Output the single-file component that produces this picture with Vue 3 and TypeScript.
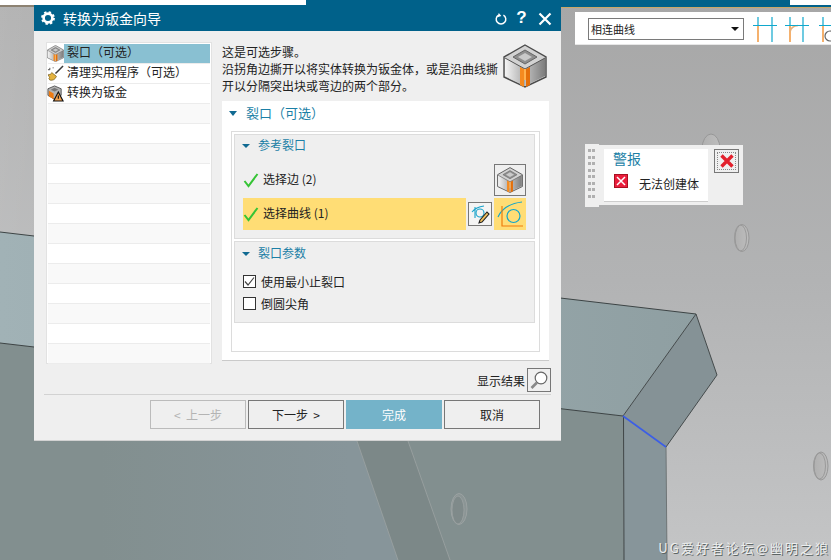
<script setup lang="ts">
const steps = ['裂口（可选）', '清理实用程序（可选）', '转换为钣金']
const emptyRows = Array.from({ length: 13 }, (_, i) => i + 3)
</script>

<template>
  <div class="desktop">
    <svg class="symbols" width="0" height="0">
      <defs>
        <linearGradient id="cube-left" x1="0" x2="1" y1="0" y2="0">
          <stop offset="0" stop-color="#f4f4f4" />
          <stop offset="1" stop-color="#a9a9a9" />
        </linearGradient>
        <linearGradient id="cube-right" x1="0" x2="1" y1="0" y2="0">
          <stop offset="0" stop-color="#c2c2c2" />
          <stop offset="1" stop-color="#7d7d7d" />
        </linearGradient>
      </defs>
      <symbol id="cube" viewBox="0 0 44 44">
        <path d="M22 1 43 13 43 33 22 43 1 33 1 13Z" fill="#d2d2d2" stroke="#4a4a4a" stroke-width="1.4" />
        <path d="M22 6 34 13 22 20 10 13Z" fill="#8e8e8e" stroke="#666" />
        <path d="M22 9 29 13 22 17 15 13Z" fill="#c9c9c9" />
        <path d="M2 14 22 25 22 42 2 32Z" fill="url(#cube-left)" />
        <path d="M42 14 22 25 22 42 42 32Z" fill="url(#cube-right)" />
        <path d="M2 14 22 25 42 14" fill="none" stroke="#555" stroke-width="1" />
        <path d="M17 23 21 25 21 43 17 41Z" fill="#f58a1f" />
        <path d="M23 25 27 23 27 41 23 43Z" fill="#e46f0a" />
        <path d="M21 25 23 25 23 36 21 36Z" fill="#ffb04d" />
      </symbol>
    </svg>

    <svg class="scene" viewBox="0 0 831 560" width="831" height="560">
      <defs>
        <linearGradient id="wall" x1="0" x2="0" y1="0" y2="1">
          <stop offset="0" stop-color="#a7a7a7" />
          <stop offset="0.5" stop-color="#b2b3b4" />
          <stop offset="1" stop-color="#c4c5c6" />
        </linearGradient>
        <linearGradient id="wall-left" x1="0" x2="1" y1="0" y2="0">
          <stop offset="0" stop-color="#fff" stop-opacity="0.16" />
          <stop offset="1" stop-color="#fff" stop-opacity="0" />
        </linearGradient>
        <linearGradient id="top-face" x1="0" x2="1" y1="0" y2="0">
          <stop offset="0" stop-color="#a1b2b6" />
          <stop offset="1" stop-color="#8f9fa2" />
        </linearGradient>
        <linearGradient id="front-face" gradientUnits="userSpaceOnUse" x1="100" x2="350" y1="0" y2="0">
          <stop offset="0" stop-color="#828f8f" />
          <stop offset="1" stop-color="#87959a" />
        </linearGradient>
        <linearGradient id="hole-fill" x1="0" x2="1" y1="0" y2="0">
          <stop offset="0" stop-color="#b0b0b0" />
          <stop offset="1" stop-color="#bdbdbd" />
        </linearGradient>
      </defs>
      <rect width="831" height="560" fill="url(#wall)" />
      <rect width="220" height="560" fill="url(#wall-left)" />
      <rect x="0" y="0" width="306" height="5" fill="#fff" />
      <rect x="306" y="0" width="525" height="7" fill="#00618a" />
      <rect x="790" y="0" width="41" height="5" fill="#fff" />
      <rect x="0" y="5" width="34" height="2" fill="#8d8272" />
      <rect x="561" y="7" width="270" height="1" fill="#c9a868" />

      <path d="M0 232 696 314 623 416 0 343Z" fill="url(#top-face)" />
      <path d="M0 343 623 416 624 560 0 560Z" fill="#828f8f" />
      <path d="M357 441 398 560 0 560 0 441Z" fill="url(#front-face)" />
      <path d="M357 441 408 441 450 560 398 560Z" fill="#7c8888" />
      <path d="M357 441 398 560M408 441 450 560" stroke="#a0a6a6" stroke-width="0.7" fill="none" />
      <path d="M623 416 666 447 667 560 624 560Z" fill="#87959a" />
      <path d="M696 314 717 375 666 447 623 416Z" fill="#859296" />
      <path d="M0 232 696 314M0 343 623 416" stroke="#3d4445" stroke-width="1" fill="none" />
      <path d="M696 314 717 375 666 447M696 314 623 416" stroke="#454b4c" stroke-width="1" fill="none" />
      <path d="M623.5 416 624 560" stroke="#3f4546" stroke-width="1" fill="none" />
      <path d="M666 447 667 560" stroke="#6f7576" stroke-width="1" fill="none" />
      <path d="M623 416 666 447" stroke="#3c5ee6" stroke-width="1.6" fill="none" />

      <g fill="url(#hole-fill)" stroke="#979797" stroke-width="1">
        <ellipse cx="742" cy="238" rx="7" ry="13.5" />
        <ellipse cx="711" cy="149" rx="9" ry="15" />
        <ellipse cx="821" cy="466" rx="7" ry="14" />
      </g>
      <g fill="none" stroke="#9a9a9a" stroke-width="1">
        <ellipse cx="740.5" cy="238" rx="6" ry="13" />
        <ellipse cx="819.5" cy="466" rx="6" ry="13" />
      </g>
      <ellipse cx="459" cy="509" rx="8" ry="15.5" fill="#8b9595" stroke="#9ba2a2" />
      <ellipse cx="458" cy="510" rx="6" ry="14" fill="#7f8a8a" stroke="#a0a6a6" stroke-width="0.7" />
    </svg>

    <div class="watermark">UG爱好者论坛@幽明之狼</div>

    <section class="toolbar">
      <div class="select">
        <span>相连曲线</span>
        <i class="select-arrow"></i>
      </div>
      <svg class="tool" width="26" height="26" viewBox="0 0 26 26">
        <path d="M5 8V25" stroke="#ef7d0d" stroke-width="1.2" fill="none" />
        <path d="M5 0V8M19 0V25M0 8.5H24" stroke="#10a8cd" stroke-width="1.2" fill="none" />
      </svg>
      <svg class="tool" width="26" height="26" viewBox="0 0 26 26">
        <path d="M5 8V25" stroke="#ef7d0d" stroke-width="1.2" fill="none" />
        <path d="M5 15Q6 9 13 8.5" stroke="#e9b27a" stroke-width="1.6" fill="none" />
        <path d="M5 0V8M18 0V25M0 8.5H24" stroke="#10a8cd" stroke-width="1.2" fill="none" />
      </svg>
      <svg class="tool" width="26" height="26" viewBox="0 0 26 26">
        <path d="M6 8V25" stroke="#ef7d0d" stroke-width="1.2" fill="none" />
        <path d="M6 0V8M2 8.5H26" stroke="#10a8cd" stroke-width="1.2" fill="none" />
        <circle cx="13" cy="19" r="5" stroke="#666" stroke-width="1.2" fill="none" />
      </svg>
    </section>

    <section class="dialog">
      <header class="titlebar">
        <svg width="14" height="14" viewBox="0 0 16 16">
          <circle cx="8" cy="8" r="5" fill="none" stroke="#fff" stroke-width="3" />
          <circle cx="8" cy="8" r="6.8" fill="none" stroke="#fff" stroke-width="2.2" stroke-dasharray="2.7 2.64" />
        </svg>
        <h1>转换为钣金向导</h1>
        <svg class="reset" width="12" height="12" viewBox="0 0 14 14">
          <path d="M4.2 2.4A5.6 5.6 0 1 0 9.8 2.4" fill="none" stroke="#fff" stroke-width="1.7" />
          <path d="M4.4 0 7.4 3.4 2.8 5Z" fill="#fff" />
        </svg>
        <span class="help">?</span>
        <svg class="close" width="14" height="14" viewBox="0 0 14 14">
          <path d="M1.5 1.5 12.5 12.5M12.5 1.5 1.5 12.5" stroke="#fff" stroke-width="2.2" fill="none" />
        </svg>
      </header>

      <div class="body">
        <ul class="steps">
          <li v-for="(step, i) in steps" :key="step" class="step" :class="{ active: i === 0 }">
            <svg v-if="i === 0" width="17" height="17"><use href="#cube" /></svg>
            <svg v-else-if="i === 1" width="17" height="17" viewBox="0 0 18 18">
              <path d="M17 1 9 9" stroke="#3a3a3a" stroke-width="1.6" fill="none" />
              <path d="M5 8 10 12Q8 17 3 16 1 14 3 13 1 12 1.500 10 4 11 5 8Z" fill="#e4b340" stroke="#6e5518" stroke-width="0.7" />
              <path d="M1 5h2M3 3v2M6 3h1" stroke="#444" stroke-width="1" fill="none" />
            </svg>
            <svg v-else width="17" height="17" viewBox="0 0 18 18">
              <path d="M8 1 15 4V11L8 15 1 11V4Z" fill="#b4b4b4" stroke="#555" />
              <path d="M8 3 12 5 8 7 4 5Z" fill="#777" />
              <path d="M2 6 7 9V15L2 12Z" fill="#ee7b12" />
              <path d="M12 7.500 17 17H7Z" fill="#f4a24e" stroke="#111" stroke-width="1.200" />
              <path d="M12 11V14.500" stroke="#111" stroke-width="1.200" />
            </svg>
            <span class="step-label">{{ step }}</span>
          </li>
          <li v-for="n in emptyRows" :key="n" class="step" :class="{ odd: n % 2 === 1 }"></li>
        </ul>

        <div class="main">
          <div class="intro">
            <p>这是可选步骤。<br />沿拐角边撕开以将实体转换为钣金体，或是沿曲线撕<br />开以分隔突出块或弯边的两个部分。</p>
            <svg class="intro-icon" width="44" height="44"><use href="#cube" /></svg>
          </div>

          <div class="panel">
            <div class="section-head"><i class="caret"></i>裂口（可选）</div>
            <div class="frame">
              <div class="group group-ref">
                <div class="group-head"><i class="caret small"></i>参考裂口</div>
                <div class="pick">
                  <div class="pick-field">
                    <svg class="check" width="16" height="16" viewBox="0 0 16 16">
                      <path d="M1.500 9 5.500 14 14.500 2" stroke="#35c435" stroke-width="2" fill="none" />
                    </svg>
                    选择边 (2)
                  </div>
                  <button class="icon-btn large"><svg width="26" height="26"><use href="#cube" /></svg></button>
                </div>
                <div class="pick">
                  <div class="pick-field current">
                    <svg class="check" width="16" height="16" viewBox="0 0 16 16">
                      <path d="M1.500 9 5.500 14 14.500 2" stroke="#35c435" stroke-width="2" fill="none" />
                    </svg>
                    选择曲线 (1)
                  </div>
                  <button class="icon-btn small-btn">
                    <svg width="20" height="20" viewBox="0 0 20 20">
                      <circle cx="10" cy="9" r="4" fill="none" stroke="#17a3cb" stroke-width="1.100" />
                      <path d="M2 8Q6 3 14 2M5 3V14" fill="none" stroke="#17a3cb" stroke-width="1.100" />
                      <path d="M10 16 17 8 19 10 12 18 9 19Z" fill="#f3c25e" stroke="#222" stroke-width="1.100" />
                    </svg>
                  </button>
                  <button class="icon-btn large lit">
                    <svg width="30" height="30" viewBox="0 0 30 30">
                      <circle cx="18.500" cy="17" r="6.500" fill="none" stroke="#10a4cc" stroke-width="1.200" />
                      <path d="M3 18Q9 5 27 3" fill="none" stroke="#10a4cc" stroke-width="1.200" />
                      <path d="M7 7V27H28" fill="none" stroke="#ef7d0d" stroke-width="1.200" />
                    </svg>
                  </button>
                </div>
              </div>

              <div class="group group-params">
                <div class="group-head"><i class="caret small"></i>裂口参数</div>
                <label class="option">
                  <span class="box">
                    <svg width="11" height="11" viewBox="0 0 11 11">
                      <path d="M1 5.500 4 9 10 1.500" stroke="#444" stroke-width="1.200" fill="none" />
                    </svg>
                  </span>
                  使用最小止裂口
                </label>
                <label class="option"><span class="box"></span>倒圆尖角</label>
              </div>
            </div>
          </div>
        </div>
      </div>

      <div class="result">
        显示结果
        <button class="icon-btn result-btn">
          <svg width="20" height="20" viewBox="0 0 20 20">
            <circle cx="12" cy="8" r="5.800" fill="#fff" stroke="#666" stroke-width="1.200" />
            <path d="M8 12.500 2.500 18" stroke="#888" stroke-width="2.600" />
          </svg>
        </button>
      </div>
      <div class="rule"></div>

      <footer class="actions">
        <button class="action disabled">&lt;&nbsp;&nbsp;上一步</button>
        <button class="action">下一步&nbsp;&nbsp;&gt;</button>
        <button class="action primary">完成</button>
        <button class="action">取消</button>
      </footer>
    </section>

    <section class="alert">
      <div class="grip"><i v-for="n in 16" :key="n"></i></div>
      <div class="alert-body">
        <div class="alert-title">警报</div>
        <div class="alert-line">
          <span class="alert-icon">
            <svg width="10" height="10" viewBox="0 0 10 10">
              <path d="M1 1 9 9M9 1 1 9" stroke="#fff" stroke-width="1.500" />
            </svg>
          </span>
          无法创建体
        </div>
      </div>
      <div class="alert-side">
        <button class="alert-close">
          <svg width="16" height="16" viewBox="0 0 16 16">
            <path d="M2.500 2.500 13.500 13.500M13.500 2.500 2.500 13.500" stroke="#e2202c" stroke-width="3.400" />
          </svg>
        </button>
      </div>
    </section>
  </div>
</template>

<style>
html,
body {
  margin: 0;
  overflow: hidden;
}
</style>

<style scoped>
* {
  box-sizing: border-box;
}

.desktop {
  position: relative;
  width: 831px;
  height: 560px;
  overflow: hidden;
  font-family: "Noto Sans CJK SC", "Noto Sans", sans-serif;
  font-size: 12px;
  color: #222;
}

.symbols {
  position: absolute;
}

.scene {
  position: absolute;
  left: 0;
  top: 0;
  display: block;
}

.watermark {
  position: absolute;
  right: 1px;
  bottom: 3px;
  font-size: 13px;
  line-height: 18px;
  letter-spacing: 2px;
  color: #eceeee;
  text-shadow: 1px 1px 0 #5d6565;
  white-space: nowrap;
}

.toolbar {
  position: absolute;
  left: 575px;
  top: 12px;
  width: 256px;
  height: 33px;
  background: #fff;
  border-bottom: 1px solid #e6e6e6;
  display: flex;
  align-items: flex-start;
  padding: 6px 0 0 13px;
  overflow: hidden;
}

.select {
  width: 156px;
  height: 22px;
  flex: none;
  border: 1px solid #7a7a7a;
  display: flex;
  align-items: center;
  justify-content: space-between;
  padding: 0 4px 0 2px;
  font-size: 11px;
}

.select-arrow {
  border-top: 4px solid #111;
  border-left: 4px solid transparent;
  border-right: 4px solid transparent;
}

.tool {
  flex: none;
  margin: -1px 6px 0 0;
}

.tool:first-of-type {
  margin-left: 9px;
}

.dialog {
  position: absolute;
  left: 34px;
  top: 5px;
  width: 527px;
  height: 436px;
  background: #efefef;
  border-bottom: 1px solid #d2d2d2;
}

.titlebar {
  height: 26px;
  background: #00618a;
  color: #fff;
  display: flex;
  align-items: center;
  padding-left: 7px;
}

.titlebar h1 {
  margin: 0 0 0 8px;
  flex: 1;
  font-size: 14px;
  line-height: 26px;
  font-weight: 400;
}

.reset {
  margin: 2px 0 0;
}

.help {
  width: 11px;
  margin: 0 0 0 9px;
  font-family: "Liberation Sans", sans-serif;
  font-size: 17px;
  font-weight: 700;
  text-align: center;
  line-height: 26px;
}

.close {
  margin: 1px 9px 0 11px;
}

.body {
  display: flex;
  gap: 10px;
  padding: 11px 12px 0;
}

.steps {
  width: 166px;
  height: 322px;
  margin: 0;
  padding: 1px;
  list-style: none;
  background: #fff;
  border: 1px solid #e2e2e2;
  flex: none;
}

.step {
  height: 20px;
  display: flex;
  align-items: center;
  border-bottom: 1px solid #ececec;
  background: #fff;
}

.step.odd {
  background: #f9f9f9;
}

.step svg {
  flex: none;
  margin-left: -1px;
}

.step-label {
  flex: 1;
  height: 19px;
  padding-left: 3px;
  line-height: 15px;
  white-space: nowrap;
}

.step.active .step-label {
  background: #89c0d2;
}

.main {
  width: 327px;
}

.intro {
  height: 59px;
  display: flex;
  justify-content: space-between;
  padding-top: 1px;
}

.intro p {
  margin: 0;
  line-height: 17px;
  white-space: nowrap;
}

.intro-icon {
  margin: 1px 2px 0 0;
}

.panel {
  height: 260px;
  background: #fff;
  border-bottom: 1px solid #cacaca;
  padding: 0 9px;
}

.section-head {
  height: 30px;
  display: flex;
  align-items: center;
  font-size: 13px;
  color: #1c7fa6;
  padding: 0 0 8px 15px;
  position: relative;
}

.caret {
  position: absolute;
  left: -2px;
  top: 10px;
  border-top: 5px solid #116a92;
  border-left: 4.500px solid transparent;
  border-right: 4.500px solid transparent;
}

.caret.small {
  left: 7px;
  top: 9px;
  border-top-width: 4px;
  border-left-width: 4px;
  border-right-width: 4px;
}

.frame {
  width: 309px;
  height: 221px;
  border: 1px solid #dcdcdc;
  padding: 2px 4px 0 2px;
  display: flex;
  flex-direction: column;
  gap: 2px;
}

.group {
  background: #efefef;
  border: 1px solid #dcdcdc;
  padding-left: 8px;
}

.group-ref {
  height: 105px;
}

.group-params {
  height: 82px;
}

.group-head {
  position: relative;
  height: 22px;
  margin-left: -8px;
  padding-left: 23px;
  line-height: 20px;
  color: #1c7fa6;
}

.group-ref .group-head {
  height: 29px;
}

.group-params .group-head {
  margin-bottom: 6px;
  line-height: 22px;
}

.group-params .caret.small {
  top: 10px;
}

.pick {
  width: 283px;
  height: 32px;
  margin-bottom: 2px;
  display: flex;
  align-items: center;
  gap: 2px;
}

.pick-field {
  flex: 1;
  height: 32px;
  display: flex;
  align-items: center;
  gap: 4px;
  padding-bottom: 3px;
}

.pick-field.current {
  flex: none;
  width: 223px;
  background: #ffdd75;
}

.check {
  flex: none;
  margin-top: 3px;
}

.icon-btn {
  flex: none;
  padding: 0;
  background: transparent;
  border: 1px solid #777;
  display: flex;
  align-items: center;
  justify-content: center;
}

.icon-btn.large {
  width: 32px;
  height: 32px;
}

.icon-btn.lit {
  background: #ffdd75;
  border-color: #ffdd75;
}

.small-btn {
  width: 24px;
  height: 24px;
  background: #f4f4f4;
}

.option {
  height: 22px;
  display: flex;
  align-items: center;
  gap: 5px;
  color: #222;
}

.box {
  width: 13px;
  height: 13px;
  border: 1px solid #333;
  background: #fff;
  display: flex;
  align-items: center;
  justify-content: center;
}

.result {
  height: 24px;
  margin-top: 4px;
  padding-right: 10px;
  display: flex;
  align-items: center;
  justify-content: flex-end;
  gap: 2px;
}

.result-btn {
  width: 24px;
  height: 24px;
}

.rule {
  height: 1px;
  margin: 2px 10px 0;
  background: #d2d2d2;
}

.actions {
  display: flex;
  gap: 2px;
  margin-top: 5px;
  padding-left: 116px;
}

.action {
  width: 96px;
  height: 29px;
  padding: 0;
  background: transparent;
  border: 1px solid #777;
  font: inherit;
  color: #222;
}

.action.disabled {
  border-color: #bbb;
  color: #b4b4b4;
}

.action.primary {
  background: #74b3c9;
  border-color: #74b3c9;
  color: #fff;
}

.alert {
  position: absolute;
  left: 585px;
  top: 144px;
  width: 158px;
  height: 63px;
  display: flex;
  align-items: flex-start;
}

.grip {
  width: 14px;
  height: 63px;
  flex: none;
  background: #efefef;
  display: grid;
  grid-template-columns: 3px 3px;
  grid-auto-rows: 3px;
  column-gap: 1px;
  row-gap: 3.500px;
  padding: 5px 0 0 3px;
  align-content: start;
}

.grip i {
  background: #b0b0b0;
}

.alert-body {
  width: 109px;
  height: 60px;
  margin-top: 1px;
  flex: none;
  background: #efefef;
  padding: 4px 0 3px 5px;
}

.alert-title {
  height: 20px;
  padding: 0 0 0 9px;
  background: #fff;
  font-size: 14px;
  line-height: 18px;
  color: #1c7fa6;
}

.alert-line {
  height: 33px;
  display: flex;
  align-items: flex-start;
  padding: 6px 0 0 10px;
  gap: 11px;
  background: #fff;
  border-bottom: 1px solid #cdcdcd;
  line-height: 18px;
}

.alert-icon {
  width: 14px;
  height: 14px;
  margin-top: -1px;
  flex: none;
  background: #ea1d3c;
  border: 1px solid #a81020;
  display: flex;
  align-items: center;
  justify-content: center;
}

.alert-side {
  width: 35px;
  height: 60px;
  margin-top: 1px;
  flex: none;
  padding: 4px 4px 0 6px;
  background: #efefef;
}

.alert-close {
  width: 25px;
  height: 24px;
  padding: 0;
  background: transparent;
  border: 1px solid #777;
  display: flex;
  align-items: center;
  justify-content: center;
  outline: 1px dotted #888;
  outline-offset: -4px;
}
</style>
